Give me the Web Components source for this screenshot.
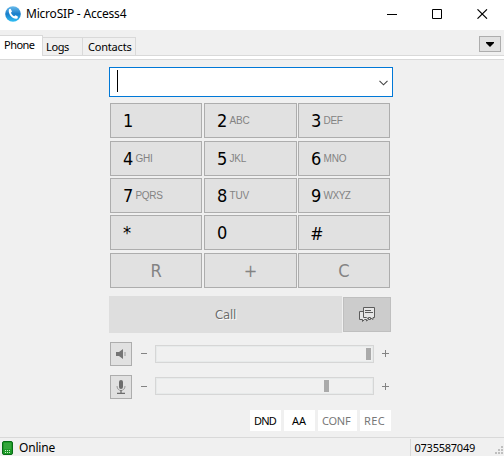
<!DOCTYPE html>
<html lang="en">
<head>
<meta charset="utf-8">
<title>MicroSIP - Access4</title>
<style>
html,body{margin:0;width:504px;height:456px;overflow:hidden;background:#f0f0f0}
body{font:11px/14px "Noto Sans","Open Sans",sans-serif;color:#000}
</style>
</head>
<body>
<phone-app></phone-app>
<script>
class Base extends HTMLElement{
  constructor(){
    super();
    const t=document.createElement('template');
    t.innerHTML='<style>*{box-sizing:border-box}:host{box-sizing:border-box}svg{display:block;flex:none}'+this.constructor.css+'</style>'+this.constructor.html;
    this.attachShadow({mode:'open'}).append(t.content.cloneNode(true));
  }
}
const define=(name,css,html)=>customElements.define(name,class extends Base{static css=css;static html=html});

/* Text label; "w" spreads or tightens its letters to a given width. */
customElements.define('ui-label',class extends Base{
  static css=':host{display:inline-block;white-space:pre;flex:none}span{display:inline-block}';
  static html='<span><slot></slot></span>';
  connectedCallback(){
    const w=+this.getAttribute('w'),n=this.textContent.length;
    if(!w)return;
    const s=this.shadowRoot.querySelector('span');
    s.style.letterSpacing=((w-s.getBoundingClientRect().width)/n)+'px';
  }
});

define('title-bar',`:host{display:flex;height:30px;background:#fff;padding:6px 16px 0 5px;font-size:12px;line-height:16px}
ui-label{margin:0 auto 0 5px}.c{margin-top:3px}.x{margin-left:35px}`,
`<svg width="16" height="16" viewBox="0 0 16 16"><defs><linearGradient id="g" x1="0" y1="0" x2="0" y2="1"><stop offset="0" stop-color="#6bbcec"/><stop offset=".5" stop-color="#187dca"/><stop offset="1" stop-color="#32c0f4"/></linearGradient></defs>
<circle cx="8" cy="8" r="7.8" fill="url(#g)"/><path d="M4 3.2 5.6 2.8 7 5.4 5.9 6.8C6.5 8.4 7.7 9.6 9.2 10.3L10.7 9.2 13 10.8 12.4 12.5C8.6 14.2 2.4 8 4 3.2Z" fill="#fff"/></svg>
<ui-label w="100.3">MicroSIP - Access4</ui-label>
<svg class="c" width="10" height="10"><path d="M0 5.5H10" stroke="#000"/></svg>
<svg class="c x" width="10" height="10"><path d="M.5.5H9.5V9.5H.5Z" fill="none" stroke="#000"/></svg>
<svg class="c x" width="11" height="10"><path d="M.5.3 10 9.7M10 .3.5 9.7" stroke="#000" stroke-width="1.1"/></svg>`);

define('tab-item',`:host{display:block;height:18px;border:1px solid #d9d9d9;border-bottom:0;border-left:0;padding:2px 0 0 4px;background:#f0f0f0}
:host([active]){height:21px;background:#fff;border-left:0;margin-bottom:-1px;padding:2px 0 0 4px}`,`<slot></slot>`);

define('tab-bar',`:host{display:flex;flex-direction:column;height:30px;border-bottom:1px solid #d9d9d9;background:#fff}
.r{display:flex;height:26px;border-bottom:1px solid #d9d9d9;background:#f0f0f0;align-items:flex-end;padding-right:3px}
.d{width:22px;height:16px;border:1px solid #adadad;background:#e1e1e1;margin:0 0 3px auto;display:flex;justify-content:center;padding-top:5px}`,
`<div class="r"><tab-item active style="width:43px"><ui-label w="30.5">Phone</ui-label></tab-item><tab-item style="width:40px"><ui-label w="23" style="margin-left:-1px">Logs</ui-label></tab-item><tab-item style="width:53px"><ui-label w="43.5" style="margin-left:1px">Contacts</ui-label></tab-item>
<div class="d"><svg width="8" height="5"><path d="M0 0H8V1L4 5 0 1Z"/></svg></div></div>`);

define('dial-input',`:host{display:flex;width:284px;height:30px;margin-left:109px;border:1px solid #0078d7;background:#fff;justify-content:space-between;padding:2px 4px 0 7px}
i{width:1px;height:22px;background:#000}svg{margin-top:10px}`,
`<i></i><svg width="9" height="6"><path d="M.5.8 4.5 4.8 8.5.8" fill="none" stroke="#444" stroke-width="1.1"/></svg>`);

define('dial-key',`:host{display:flex;align-items:center;height:35px;border:1px solid #adadad;background:#e1e1e1;padding:1px 0 0 12px;font:18px/24px "DejaVu Sans Condensed","DejaVu Sans",sans-serif;font-stretch:condensed}
:host([muted]){justify-content:center;padding:1px 0 0 0;color:#838383}
:host([light]){font-family:"Noto Sans",sans-serif;padding-top:0}
::slotted(small){font:10px/12px "Liberation Sans",Arial,sans-serif;color:#838383;margin:0 0 0 2px}`,`<slot></slot>`);

const keys=[['1'],['2','ABC',20],['3','DEF',19],['4','GHI',17],['5','JKL',16.5],['6','MNO',23],['7','PQRS',27],['8','TUV',19.5],['9','WXYZ',27],['*'],['0'],['#']];
define('key-pad',`:host{display:grid;grid-template-columns:92px 93px 92px;column-gap:2px;grid-template-rows:38px 37px 37px 38px 35px;margin:6px 0 0 110px;width:281px}
dial-key:nth-of-type(3n){margin-left:-1px;margin-right:1px}`,
keys.map(([n,l,w])=>`<dial-key${n==='#'?' light':''}><ui-label w="10.5">${n}</ui-label>${l?`<small><ui-label w="${w}">${l}</ui-label></small>`:''}</dial-key>`).join('')+
['R','+','C'].map(n=>`<dial-key muted><ui-label>${n}</ui-label></dial-key>`).join(''));

define('call-row',`:host{display:flex;gap:1px;margin:8px 0 0 109px;height:37px}
.call{width:233px;background:#dedede;display:flex;align-items:center;justify-content:center;font:13px/16px "DejaVu Sans Condensed","DejaVu Sans",sans-serif;font-stretch:condensed;color:#6d6d6d;text-shadow:1px 1px #fff}
.msg{width:48px;height:35px;margin-top:1px;border:1px solid #bfbfbf;background:#ccc;padding:9px 0 0 15px}`,
`<div class="call"><ui-label w="21">Call</ui-label></div>
<div class="msg"><svg width="17" height="16" fill="#e6e6e6" stroke="#5c5c5c"><path d="M.5 4.5H11.5V12.5H9.5L7.5 14V12.5H5.5L3.5 14.5V12.5H.5Z"/><path d="M4.5.5H15.5V10.5H14V12.5L11 10.5H9.5V12L7.5 10.5H4.5Z"/><path d="M6 3.5H12M6 5.5H14" fill="none"/></svg></div>`);

define('volume-row',`:host{display:flex;height:24px;margin-left:110px}
.b{width:22px;height:24px;border:1px solid #adadad;background:#e1e1e1;display:flex;align-items:center;justify-content:center}
.m{margin:11px 8px 0 9px}.p{margin:8px 0 0 8px}
.t{width:219px;height:18px;border:1px solid #d6d6d6;box-shadow:inset 0 0 0 1px #e7eaea;margin-top:var(--top);padding:2px 0 0 var(--pos)}
.h{width:5px;height:12px;background:#aaa}`,
`<div class="b"><slot></slot></div><svg class="m" width="6" height="1"><path d="M0 .5H6" stroke="#838383"/></svg>
<div class="t"><div class="h"></div></div><svg class="p" width="7" height="7"><path d="M0 3.5H7M3.5 0V7" stroke="#838383"/></svg>`);

define('mode-row',`:host{display:flex;gap:3px;margin:11px 0 0 250px;height:21px}
div{background:#fff;width:31px;display:flex;align-items:center;padding:1px 0 0 4px}.g{color:#787878}`,
`<div><ui-label w="22">DND</ui-label></div><div style="padding-left:8px"><ui-label w="14">AA</ui-label></div><div class="g" style="width:39px"><ui-label w="28.5">CONF</ui-label></div><div class="g"><ui-label w="21">REC</ui-label></div>`);

define('status-bar',`:host{display:flex;height:19px;margin-top:6px;border-top:1px solid #d9d9d9;padding:3px 1px 0 2px}
.s{width:1px;height:17px;background:#d9d9d9;margin:-2px 4px 0 auto}.n{margin-right:20px}.o{margin-left:6px}.grip{margin-top:5px}`,
`<svg width="11" height="14"><rect x=".5" y=".5" width="10" height="13" rx="1.5" fill="#1d9a28" stroke="#086b16"/><rect x="2" y="2" width="7" height="6" fill="#35a53c"/><path d="M3.5 9V13M5.5 9V13M7.5 9V13" stroke="#c9f3c8" stroke-dasharray="1 1"/></svg>
<ui-label class="o" style="font-size:12px" w="36">Online</ui-label><span class="s"></span><ui-label class="n" w="60.5">0735587049</ui-label>
<svg class="grip" width="8" height="8" fill="#bfbfbf"><path d="M6 0H8V2H6ZM3 3H5V5H3ZM6 3H8V5H6ZM0 6H2V8H0ZM3 6H5V8H3ZM6 6H8V8H6Z"/></svg>`);

define('phone-app',`:host{display:block;width:504px;height:456px;background:#f0f0f0}
dial-input{margin-top:7px}.v1{margin-top:9px;--top:3px;--pos:210px}.v2{margin-top:9px;--top:2px;--pos:168px}`,
`<title-bar></title-bar><tab-bar></tab-bar><dial-input></dial-input><key-pad></key-pad><call-row></call-row>
<volume-row class="v1"><svg width="12" height="12" fill="#747474"><path d="M1 4H4L8 1V11L4 8H1Z"/><path d="M10 4V8" stroke="#999"/></svg></volume-row>
<volume-row class="v2"><svg width="12" height="14"><rect x="4" y="0" width="4" height="9" rx="2" fill="#6d6d6d"/><path d="M2 6C2 12 10 12 10 6" fill="none" stroke="#999"/><path d="M6 10V13M2 13.5H10" stroke="#6d6d6d" stroke-width="1.3"/></svg></volume-row>
<mode-row></mode-row><status-bar></status-bar>`);
</script>
</body>
</html>
